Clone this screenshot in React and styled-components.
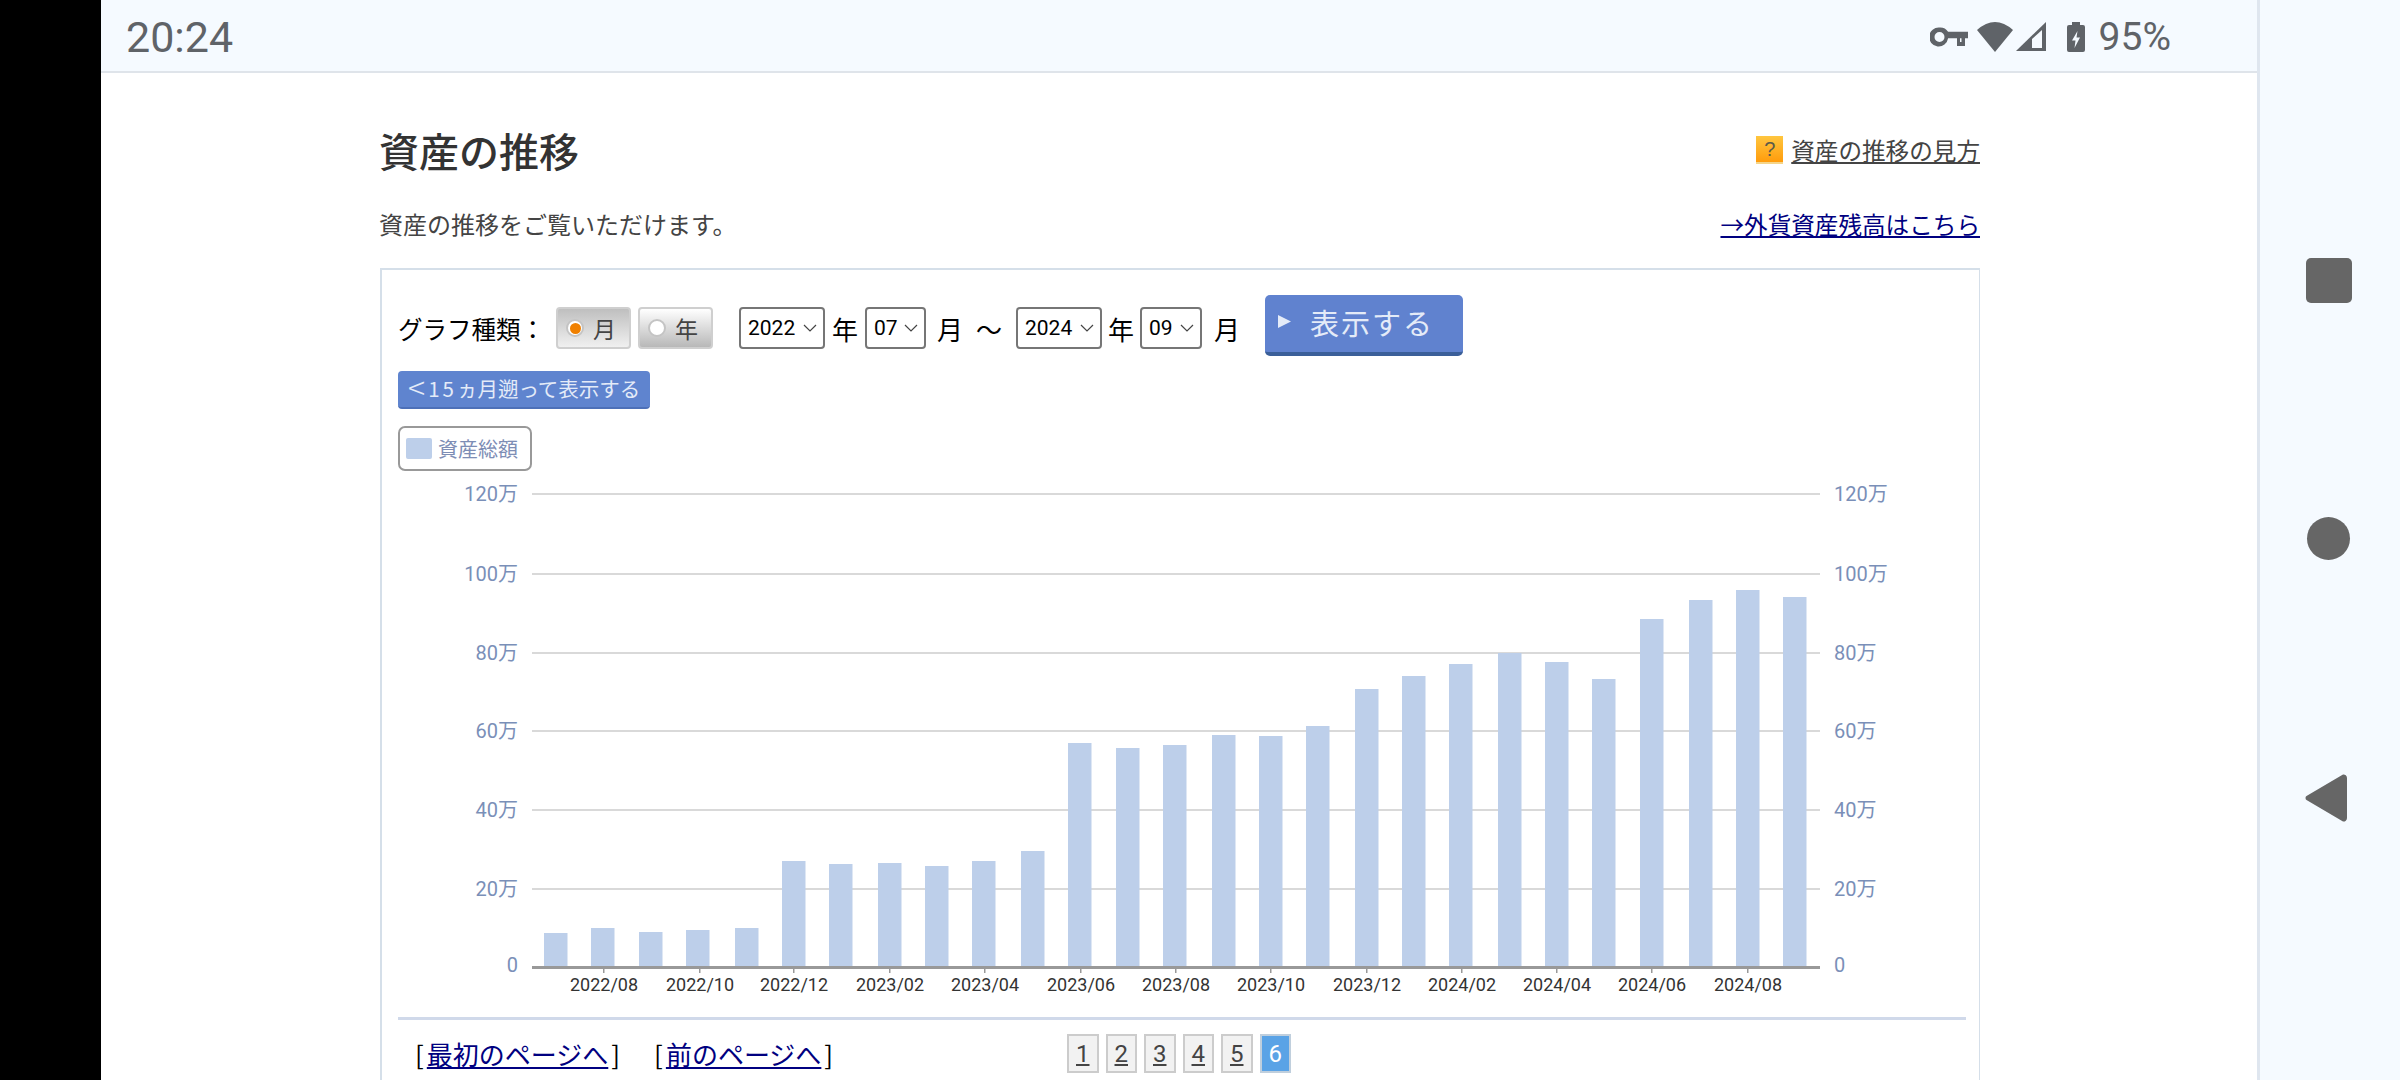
import React from 'react';
import styled, { createGlobalStyle } from 'styled-components';

const GlobalStyle = createGlobalStyle`
    html, body {
        margin: 0;
        padding: 0;
        background: #fff;
        overflow: hidden;
    }
    * {
        box-sizing: border-box;
    }
`;

const JP = `'Noto Sans CJK JP', 'Noto Sans', sans-serif`;
const NUM = `Roboto, 'Noto Sans CJK JP', sans-serif`;

// x / top of every bar, read off the page
const BARS = [
    [544, 933], [591, 928], [639, 932], [686, 930], [735, 928], [782, 861], [829, 864], [878, 863], [925, 866],
    [972, 861], [1021, 851], [1068, 743], [1116, 748], [1163, 745], [1212, 735], [1259, 736], [1306, 726],
    [1355, 689], [1402, 676], [1449, 664], [1498, 653], [1545, 662], [1592, 679], [1640, 619], [1689, 600],
    [1736, 590], [1783, 597],
];
const GRID = [
    ['120万', 494],
    ['100万', 574],
    ['80万', 653],
    ['60万', 731],
    ['40万', 810],
    ['20万', 889],
];
const MONTHS = [
    ['2022/08', 604], ['2022/10', 700], ['2022/12', 794], ['2023/02', 890], ['2023/04', 985], ['2023/06', 1081],
    ['2023/08', 1176], ['2023/10', 1271], ['2023/12', 1367], ['2024/02', 1462], ['2024/04', 1557], ['2024/06', 1652],
    ['2024/08', 1748],
];

const Page = styled.div`
    display: flex;
    width: 2400px;
    height: 1080px;
    overflow: hidden;
    background: #fff;
    font-family: ${JP};
`;
const BlackEdge = styled.div`
    width: 101px;
    flex: none;
    background: #000;
`;
const Screen = styled.div`
    flex: 1;
    min-width: 0;
    display: flex;
    flex-direction: column;
`;
const StatusBar = styled.div`
    flex: none;
    height: 73px;
    display: flex;
    align-items: center;
    justify-content: space-between;
    padding: 2px 86px 0 25px;
    background: #f5faff;
    border-bottom: 2px solid #dfe4ea;
    color: #5f6368;
    font-family: ${NUM};
    font-size: 43px;
`;
const StatusIcons = styled.div`
    display: flex;
    align-items: center;
`;
const StatusIcon = styled.svg`
    display: block;
    flex: none;
    margin-left: ${p => p.$ml || 0}px;
    fill: #5f6368;
`;
const Percent = styled.span`
    margin-left: 14px;
    font-size: 39px;
`;

const NavBar = styled.div`
    width: 143px;
    flex: none;
    display: flex;
    flex-direction: column;
    align-items: center;
    justify-content: center;
    gap: 214px;
    padding-right: 3px;
    background: #f5faff;
    border-left: 3px solid #dfe6ef;
`;
const NavSquare = styled.div`
    width: 46px;
    height: 45px;
    border-radius: 5px;
    background: #666;
`;
const NavCircle = styled.div`
    width: 43px;
    height: 43px;
    border-radius: 50%;
    background: #666;
`;
const NavBack = styled.svg`
    display: block;
    margin-left: -6px;
    fill: #666;
`;

const Content = styled.div`
    flex: 1;
    padding: 56px 277px 0 279px;
`;
const TitleRow = styled.div`
    display: flex;
    align-items: center;
    justify-content: space-between;
`;
const Title = styled.h1`
    margin: 0 0 0 -1px;
    font-size: 40px;
    line-height: 42px;
    font-weight: 500;
    color: #333;
`;
const HelpLink = styled.div`
    display: flex;
    align-items: center;
    gap: 8px;
`;
const HelpIcon = styled.span`
    width: 27px;
    height: 28px;
    display: flex;
    align-items: center;
    justify-content: center;
    background: linear-gradient(#ffc63f, #ff9c0c);
    border-bottom: 2px solid #f5d58a;
    color: #5a5a4a;
    font-family: 'Liberation Sans', sans-serif;
    font-size: 20px;
`;
const DarkLink = styled.a`
    font-size: 23.6px;
    line-height: 30px;
    color: #444;
    text-decoration: underline;
`;
const IntroRow = styled.div`
    display: flex;
    align-items: center;
    justify-content: space-between;
    margin-top: 38px;
`;
const Intro = styled.p`
    margin: 0 0 0 -1px;
    font-size: 24px;
    line-height: 30px;
    color: #444;
`;
const NavyLink = styled.a`
    font-size: 23.6px;
    line-height: 30px;
    color: #000080;
    text-decoration: underline;
`;

const Panel = styled.section`
    margin-top: 29px;
    padding: 25px 13px 40px 16px;
    border: 2px solid #d5dfe9;
    border-right-width: 1px;
`;
const Controls = styled.div`
    display: flex;
    align-items: flex-start;
    height: 61px;
`;
const Form = styled.div`
    display: flex;
    align-items: center;
    margin-top: 12px;
`;
const FieldLabel = styled.span`
    width: 158px;
    flex: none;
    font-size: 24.5px;
    color: #000;
    white-space: nowrap;
`;
const RadioTab = styled.div`
    width: 75px;
    height: 42px;
    flex: none;
    margin-right: 7px;
    display: flex;
    align-items: center;
    gap: 9px;
    padding-left: 8px;
    border: 2px solid #cfcfcf;
    border-radius: 4px;
    background: ${p => (p.$on ? 'linear-gradient(#bfbfbf, #f0f0f0)' : 'linear-gradient(#fff, #b8b8b8)')};
    color: #444;
    font-size: 23px;
`;
const RadioMark = styled.span`
    width: 18px;
    height: 18px;
    flex: none;
    display: flex;
    align-items: center;
    justify-content: center;
    border-radius: 50%;
    border: 2px solid #c4c4c4;
    background: #fff;
`;
const RadioDot = styled.span`
    width: 11px;
    height: 11px;
    border-radius: 50%;
    background: #f08000;
`;
const SelectBox = styled.div`
    width: ${p => p.$w}px;
    height: 42px;
    flex: none;
    margin-left: ${p => p.$ml || 0}px;
    display: flex;
    align-items: center;
    justify-content: space-between;
    padding: 0 6px 0 7px;
    border: 2px solid #767676;
    border-radius: 4px;
    background: #fff;
    color: #000;
    font-family: ${NUM};
    font-size: 21px;
`;
const Chevron = styled.svg`
    display: block;
    fill: none;
    stroke: #444;
    stroke-width: 1.2;
`;
const Unit = styled.span`
    width: 26px;
    flex: none;
    margin: 0 ${p => p.$mr || 0}px 0 ${p => p.$ml || 0}px;
    font-size: 26px;
    color: #000;
    text-align: center;
`;
const ShowButton = styled.button`
    width: 198px;
    height: 61px;
    margin-left: 25px;
    padding: 0 0 4px 13px;
    display: flex;
    align-items: center;
    gap: 19px;
    border: 0;
    border-bottom: 4px solid #3b5f99;
    border-radius: 5px;
    background: #6082cf;
    color: #e4ebf8;
    font-family: ${JP};
    font-size: 29px;
    letter-spacing: 2px;
`;
const PlayMark = styled.svg`
    display: block;
    fill: #e4ebf8;
`;
const BackButton = styled.button`
    display: block;
    width: 252px;
    height: 38px;
    margin-top: 15px;
    padding: 0 0 2px 10px;
    border: 0;
    border-bottom: 2px solid #4d70b8;
    border-radius: 4px;
    background: #5f84cf;
    color: #e4ebf8;
    font-family: ${JP};
    font-size: 20.5px;
    text-align: left;
    white-space: nowrap;
`;
const LessThan = styled.span`
    font-size: 32px;
    font-weight: 300;
    line-height: 0;
    margin-right: 3px;
    vertical-align: -3px;
`;
const MonthCount = styled.span`
    letter-spacing: 3px;
`;
const Legend = styled.div`
    width: 134px;
    height: 45px;
    margin-top: 17px;
    display: flex;
    align-items: center;
    gap: 6px;
    padding-left: 6px;
    border: 2px solid #999;
    border-radius: 7px;
    color: #7d8db5;
    font-size: 20px;
`;
const LegendSwatch = styled.span`
    width: 26px;
    height: 21px;
    flex: none;
    border-radius: 2px;
    background: #bdcfea;
`;
const Chart = styled.svg`
    display: block;
    margin-top: 11px;
`;
const AxisText = styled.text`
    font-family: ${NUM};
    font-size: 20px;
    fill: #7a8fb8;
`;
const MonthText = styled.text`
    font-family: ${NUM};
    font-size: 18px;
    fill: #333;
`;
const Rule = styled.hr`
    height: 3px;
    margin: 9px 0 0;
    border: 0;
    background: #d0d9ea;
`;
const Pager = styled.div`
    display: flex;
    align-items: center;
    padding: 14px 0 0 17px;
`;
const PagerLinks = styled.div`
    width: 652px;
    flex: none;
    display: flex;
    font-size: 26px;
    line-height: 39px;
    color: #000;
`;
const PagerLink = styled.a`
    padding: 0 3px;
    color: #000080;
    text-decoration: underline;
`;
const PagerItem = styled.span`
    margin-right: 34px;
    white-space: nowrap;
`;
const PageNumbers = styled.div`
    display: flex;
    gap: 7px;
`;
const PageNumber = styled.span`
    width: 31.5px;
    height: 39px;
    display: flex;
    align-items: center;
    justify-content: center;
    border: 2px solid ${p => (p.$on ? '#c0cfdd' : '#ccc')};
    background: ${p => (p.$on ? '#5aa3e6' : '#f2f2f2')};
    color: ${p => (p.$on ? '#fff' : '#444')};
    font-family: ${NUM};
    font-size: 24px;
    text-decoration: ${p => (p.$on ? 'none' : 'underline')};
`;

function Status() {
    return (
        <StatusBar>
            <span>20:24</span>
            <StatusIcons>
                <StatusIcon width="38" height="20" viewBox="0 0 38 20" fillRule="evenodd">
                    <path d="M9.5 0.5a9.5 9.5 0 0 1 8.6 4.2H38v6.6h-3V19h-8v-7.7h-8.9A9.5 9.5 0 1 1 9.5 0.5zm0 4.5a5 5 0 1 0 0 10 5 5 0 0 0 0-10zM30 11.3v3.7h1.5v-3.7z" />
                </StatusIcon>
                <StatusIcon $ml={9} width="36" height="30" viewBox="0 0 36 30">
                    <path d="M0 8Q18-8 36 8L18 30Z" />
                </StatusIcon>
                <StatusIcon $ml={3} width="30" height="29" viewBox="0 0 30 29">
                    <path d="M0 29L30 0V29Z" />
                    <path d="M16 26V17L26 8V26Z" fill="#f5faff" />
                </StatusIcon>
                <StatusIcon $ml={21} width="18" height="30" viewBox="0 0 18 30">
                    <path d="M5 0h8v3h3a2 2 0 0 1 2 2v23a2 2 0 0 1-2 2H2a2 2 0 0 1-2-2V5a2 2 0 0 1 2-2h3z" />
                    <path d="M10.5 9L5 18.5H8.5L7.5 26L13 15.5H9.5Z" fill="#f5faff" />
                </StatusIcon>
                <Percent>95%</Percent>
            </StatusIcons>
        </StatusBar>
    );
}

function DownArrow() {
    return (
        <Chevron width="14" height="8" viewBox="0 0 14 8">
            <path d="M1 1l6 6 6-6" />
        </Chevron>
    );
}

function BalanceChart() {
    return (
        <Chart width="1567" height="526" viewBox="398 482 1567 526">
            {GRID.map(([label, y]) => (
                <g key={label}>
                    <rect x="532" y={y - 1} width="1288" height="2" fill="#d9d9d9" />
                    <AxisText x="518" y={y + 7} textAnchor="end">
                        {label}
                    </AxisText>
                    <AxisText x="1834" y={y + 7}>
                        {label}
                    </AxisText>
                </g>
            ))}
            <AxisText x="518" y="972" textAnchor="end">
                0
            </AxisText>
            <AxisText x="1834" y="972">
                0
            </AxisText>
            {BARS.map(([x, top]) => (
                <rect key={x} x={x} y={top} width="23.5" height={966 - top} fill="#bdcfea" />
            ))}
            <rect x="532" y="966" width="1288" height="3" fill="#999" />
            {MONTHS.map(([label, x]) => (
                <g key={label}>
                    <rect x={x - 1} y="969" width="1.5" height="4" fill="#999" />
                    <MonthText x={x} y="991" textAnchor="middle">
                        {label}
                    </MonthText>
                </g>
            ))}
        </Chart>
    );
}

export default function App() {
    return (
        <Page>
            <GlobalStyle />
            <BlackEdge />
            <Screen>
                <Status />
                <Content>
                    <TitleRow>
                        <Title>資産の推移</Title>
                        <HelpLink>
                            <HelpIcon>?</HelpIcon>
                            <DarkLink>資産の推移の見方</DarkLink>
                        </HelpLink>
                    </TitleRow>
                    <IntroRow>
                        <Intro>資産の推移をご覧いただけます。</Intro>
                        <NavyLink>→外貨資産残高はこちら</NavyLink>
                    </IntroRow>
                    <Panel>
                        <Controls>
                            <Form>
                                <FieldLabel>グラフ種類：</FieldLabel>
                                <RadioTab $on>
                                    <RadioMark>
                                        <RadioDot />
                                    </RadioMark>
                                    月
                                </RadioTab>
                                <RadioTab>
                                    <RadioMark />年
                                </RadioTab>
                                <SelectBox $w={86} $ml={19}>
                                    2022
                                    <DownArrow />
                                </SelectBox>
                                <Unit $ml={7} $mr={7}>
                                    年
                                </Unit>
                                <SelectBox $w={61}>
                                    07
                                    <DownArrow />
                                </SelectBox>
                                <Unit $ml={11}>月</Unit>
                                <Unit $ml={13}>〜</Unit>
                                <SelectBox $w={86} $ml={14}>
                                    2024
                                    <DownArrow />
                                </SelectBox>
                                <Unit $ml={6} $mr={6}>
                                    年
                                </Unit>
                                <SelectBox $w={62}>
                                    09
                                    <DownArrow />
                                </SelectBox>
                                <Unit $ml={12}>月</Unit>
                            </Form>
                            <ShowButton>
                                <PlayMark width="13" height="13" viewBox="0 0 13 13">
                                    <path d="M0 0L13 6.5L0 13Z" />
                                </PlayMark>
                                表示する
                            </ShowButton>
                        </Controls>
                        <BackButton>
                            <LessThan>{'<'}</LessThan>
                            <MonthCount>15</MonthCount>ヵ月遡って表示する
                        </BackButton>
                        <Legend>
                            <LegendSwatch />
                            資産総額
                        </Legend>
                        <BalanceChart />
                        <Rule />
                        <Pager>
                            <PagerLinks>
                                <PagerItem>
                                    [<PagerLink>最初のページへ</PagerLink>]
                                </PagerItem>
                                <PagerItem>
                                    [<PagerLink>前のページへ</PagerLink>]
                                </PagerItem>
                            </PagerLinks>
                            <PageNumbers>
                                {[1, 2, 3, 4, 5, 6].map(n => (
                                    <PageNumber key={n} $on={n === 6}>
                                        {n}
                                    </PageNumber>
                                ))}
                            </PageNumbers>
                        </Pager>
                    </Panel>
                </Content>
            </Screen>
            <NavBar>
                <NavSquare />
                <NavCircle />
                <NavBack width="42" height="48" viewBox="0 0 42 48">
                    <path d="M38 0.5a3.5 3.5 0 0 1 4 3.5V44a3.5 3.5 0 0 1-4 3.5L1.5 26a2.5 2.5 0 0 1 0-4Z" />
                </NavBack>
            </NavBar>
        </Page>
    );
}
